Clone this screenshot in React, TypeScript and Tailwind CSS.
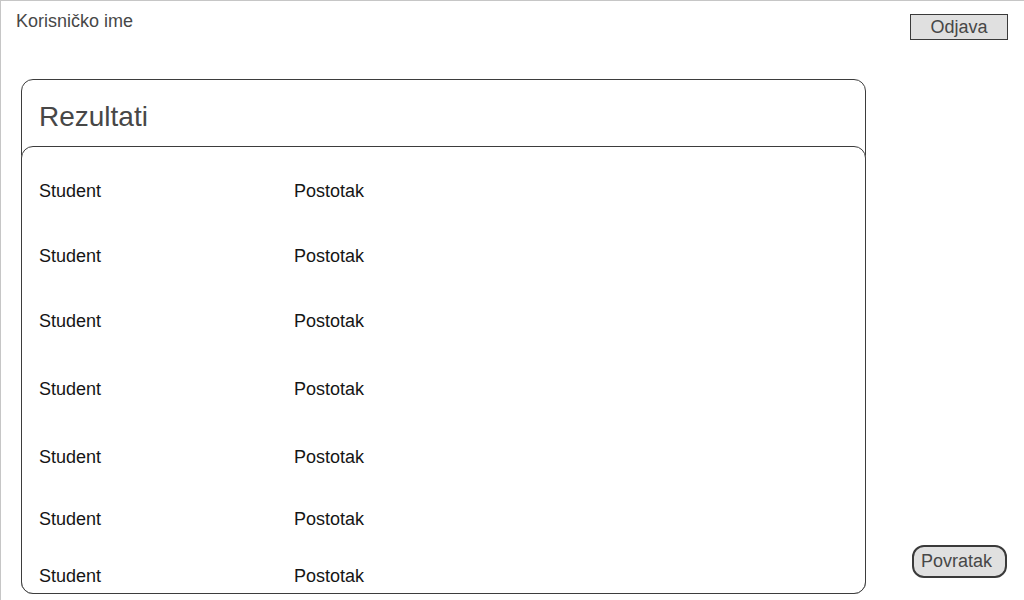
import React from 'react';

const rows = [
  { id: 1, gap: 'mt-[34px]' },
  { id: 2, gap: 'mt-[44px]' },
  { id: 3, gap: 'mt-[44px]' },
  { id: 4, gap: 'mt-[47px]' },
  { id: 5, gap: 'mt-[47px]' },
  { id: 6, gap: 'mt-[41px]' },
  { id: 7, gap: 'mt-[36px]' },
];

export default function App() {
  return (
    <div
      className="w-[1024px] h-[600px] bg-white border-t border-l border-[#c6c6c6] overflow-hidden flex flex-col"
      style={{ fontFamily: '"Liberation Sans", Arial, sans-serif' }}
    >
      {/* top bar */}
      <header className="h-[78px] shrink-0 flex items-start justify-between pl-[15px] pr-[16px]">
        <span className="mt-[10px] text-[18px] leading-[21px] text-[#474747]">Korisničko ime</span>
        <button className="mt-[13px] w-[98px] h-[26px] bg-[#e0e0e0] border border-[#3a3a3a] text-[18px] leading-[21px] text-[#474747] flex items-center justify-center">
          Odjava
        </button>
      </header>

      <div className="flex-1 flex items-start">
        <section className="ml-[20px] w-[845px] h-[515px] border border-[#3d3d3d] rounded-[12px] flex flex-col">
          <div className="h-[66px] shrink-0 pl-[17px] pt-[21px]">
            <h1 className="text-[28px] leading-[32px] text-[#474747]">Rezultati</h1>
          </div>
          <div className="-mx-px -mb-px flex-1 bg-white border border-[#3d3d3d] rounded-[12px] pl-[17px] flex flex-col">
            {rows.map((r) => (
              <div key={r.id} className={`${r.gap} flex text-[18px] leading-[21px] text-[#151515]`}>
                <span className="w-[255px]">Student</span>
                <span>Postotak</span>
              </div>
            ))}
          </div>
        </section>

        <button className="ml-auto mr-[17px] self-end mb-[22px] w-[95px] h-[33px] bg-[#e0e0e0] border-2 border-[#3a3a3a] rounded-[12px] pl-[7px] text-left text-[18px] leading-[21px] text-[#474747]">
          Povratak
        </button>
      </div>
    </div>
  );
}
